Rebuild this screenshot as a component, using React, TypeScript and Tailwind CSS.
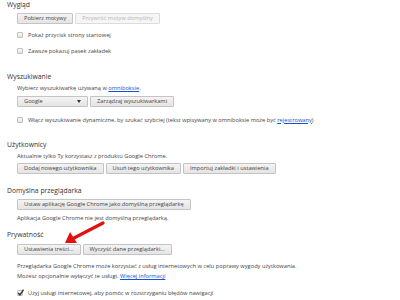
import React from "react";

const font = { fontFamily: '"Open Sans", "Noto Sans", sans-serif' };

function Btn({ children, disabled = false }: { children: React.ReactNode; disabled?: boolean }) {
	return (
		<div
			className={
				"flex h-[11px] items-center rounded-[1px] border px-[6px] text-[5.7px] leading-none whitespace-nowrap " +
				(disabled
					? "border-[#dcdcdc] bg-[#f6f6f6] text-[#b4b4b4]"
					: "border-[#c4c4c4] bg-gradient-to-b from-[#f4f4f4] to-[#e4e4e4] text-[#444]")
			}
		>
			{children}
		</div>
	);
}

function Check({ checked = false, children }: { checked?: boolean; children: React.ReactNode }) {
	return (
		<div className="flex h-[10px] items-center gap-[5px] text-[5.7px] text-[#444] whitespace-nowrap">
			<div className="relative h-[6px] w-[6px] shrink-0 rounded-[1px] border border-[#c0c0c0] bg-gradient-to-b from-[#f6f6f6] to-[#e6e6e6]">
				{checked && (
					<svg viewBox="0 0 6 6" className="absolute -left-px -top-[2px] h-[7px] w-[7px]">
						<path d="M1 3.4 L2.5 5 L5.6 0.6" fill="none" stroke="#333" strokeWidth="1.2" />
					</svg>
				)}
			</div>
			<span>{children}</span>
		</div>
	);
}

function Heading({ children, className = "" }: { children: React.ReactNode; className?: string }) {
	return <div className={"ml-[7px] h-[10px] text-[6.8px] leading-[10px] text-[#333] " + className}>{children}</div>;
}

function Text({ children, className = "" }: { children: React.ReactNode; className?: string }) {
	return <div className={"h-[10px] text-[5.7px] leading-[10px] text-[#444] whitespace-nowrap " + className}>{children}</div>;
}

function Link({ children }: { children: React.ReactNode }) {
	return <span className="text-[#1155cc] underline">{children}</span>;
}

export default function App() {
	return (
		<div className="relative h-[300px] w-[400px] overflow-hidden bg-white" style={font}>
			<Heading>Wygląd</Heading>
			<div className="pl-[17px]">
				<div className="mt-[3px] flex gap-[2px]">
					<Btn>Pobierz motywy</Btn>
					<Btn disabled>Przywróć motyw domyślny</Btn>
				</div>
				<div className="mt-[6px] flex flex-col gap-[6px]">
					<Check>Pokaż przycisk strony startowej</Check>
					<Check>Zawsze pokazuj pasek zakładek</Check>
				</div>
			</div>

			<Heading className="mt-[16px]">Wyszukiwanie</Heading>
			<div className="pl-[17px]">
				<Text className="mt-[1px]">
					Wybierz wyszukiwarkę używaną w <Link>omniboksie</Link>.
				</Text>
				<div className="mt-[3px] flex gap-[2px]">
					<div className="flex h-[11px] w-[71px] items-center justify-between rounded-[1px] border border-[#c4c4c4] bg-gradient-to-b from-[#f4f4f4] to-[#e4e4e4] px-[6px] text-[5.7px] text-[#444]">
						<span>Google</span>
						<svg viewBox="0 0 4 3" className="h-[3px] w-[4px]">
							<path d="M0 0 H4 L2 3 Z" fill="#333" />
						</svg>
					</div>
					<Btn>Zarządzaj wyszukiwarkami</Btn>
				</div>
				<div className="mt-[8px]">
					<Check>
						Włącz wyszukiwanie dynamiczne, by szukać szybciej (tekst wpisywany w omniboksie może być{" "}
						<Link>rejestrowany</Link>)
					</Check>
				</div>
			</div>

			<Heading className="mt-[15px]">Użytkownicy</Heading>
			<div className="pl-[17px]">
				<Text className="mt-[1px]">Aktualnie tylko Ty korzystasz z produktu Google Chrome.</Text>
				<div className="mt-[2px] flex gap-[2px]">
					<Btn>Dodaj nowego użytkownika</Btn>
					<Btn>Usuń tego użytkownika</Btn>
					<Btn>Importuj zakładki i ustawienia</Btn>
				</div>
			</div>

			<Heading className="mt-[12px]">Domyślna przeglądarka</Heading>
			<div className="pl-[17px]">
				<div className="mt-[3px] flex">
					<Btn>Ustaw aplikację Google Chrome jako domyślną przeglądarkę</Btn>
				</div>
				<Text className="mt-[3px]">Aplikacja Google Chrome nie jest domyślną przeglądarką.</Text>
			</div>

			<Heading className="mt-[7px]">Prywatność</Heading>
			<div className="pl-[17px]">
				<div className="mt-[4px] flex gap-[2px]">
					<Btn>Ustawienia treści...</Btn>
					<Btn>Wyczyść dane przeglądarki...</Btn>
				</div>
				<Text className="mt-[6px]">
					Przeglądarka Google Chrome może korzystać z usług internetowych w celu poprawy wygody użytkowania.
				</Text>
				<Text>
					Możesz opcjonalnie wyłączyć te usługi. <Link>Więcej informacji</Link>
				</Text>
				<div className="mt-[7px]">
					<Check checked>Użyj usługi internetowej, aby pomóc w rozstrzyganiu błędów nawigacji</Check>
				</div>
			</div>

			<svg viewBox="0 0 50 30" className="absolute left-[60px] top-[218px] h-[30px] w-[50px]">
				<path d="M43 5 L14 20" stroke="#e31010" strokeWidth="3.2" strokeLinecap="round" />
				<path d="M5 25 L10 14 L17 25 Z" fill="#e31010" />
			</svg>
		</div>
	);
}
